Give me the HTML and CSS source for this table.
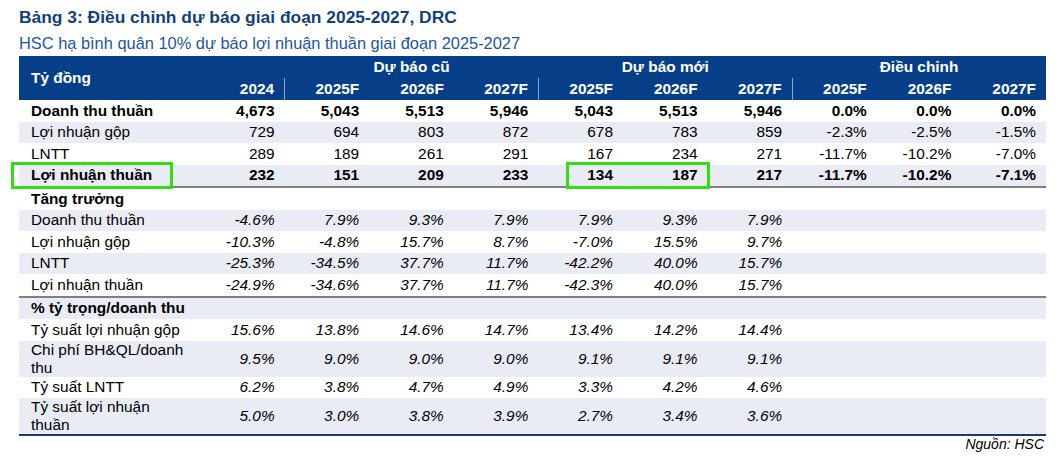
FILE: index.html
```html
<!DOCTYPE html>
<html lang="vi">
<head>
<meta charset="utf-8">
<title>Bảng 3</title>
<link rel="stylesheet" href="styles.css">
</head>
<body>
<div class="page">
  <h1 class="title">Bảng 3: Điều chỉnh dự báo giai đoạn 2025-2027, DRC</h1>
  <h2 class="subtitle">HSC hạ bình quân 10% dự báo lợi nhuận thuần giai đoạn 2025-2027</h2>
  <table class="data">
    <colgroup>
      <col class="c-label">
      <col><col><col><col><col><col><col><col><col><col>
    </colgroup>
    <thead>
      <tr>
        <th class="h-label" rowspan="2">Tỷ đồng</th>
        <th></th>
        <th class="group" colspan="3">Dự báo cũ</th>
        <th class="group" colspan="3">Dự báo mới</th>
        <th class="group" colspan="3">Điều chỉnh</th>
      </tr>
      <tr>
        <th>2024</th>
        <th class="sep">2025F</th>
        <th>2026F</th>
        <th>2027F</th>
        <th class="sep">2025F</th>
        <th>2026F</th>
        <th>2027F</th>
        <th class="sep">2025F</th>
        <th>2026F</th>
        <th>2027F</th>
      </tr>
    </thead>
    <tbody>
      <tr class="bold">
        <td>Doanh thu thuần</td>
        <td>4,673</td><td>5,043</td><td>5,513</td><td>5,946</td><td>5,043</td><td>5,513</td><td>5,946</td><td>0.0%</td><td>0.0%</td><td>0.0%</td>
      </tr>
      <tr>
        <td>Lợi nhuận gộp</td>
        <td>729</td><td>694</td><td>803</td><td>872</td><td>678</td><td>783</td><td>859</td><td>-2.3%</td><td>-2.5%</td><td>-1.5%</td>
      </tr>
      <tr>
        <td>LNTT</td>
        <td>289</td><td>189</td><td>261</td><td>291</td><td>167</td><td>234</td><td>271</td><td>-11.7%</td><td>-10.2%</td><td>-7.0%</td>
      </tr>
      <tr class="bold section-end">
        <td class="anchor">Lợi nhuận thuần<span class="hl hl-label"></span></td>
        <td>232</td><td>151</td><td>209</td><td>233</td><td class="anchor">134<span class="hl hl-values"></span></td><td>187</td><td>217</td><td>-11.7%</td><td>-10.2%</td><td>-7.1%</td>
      </tr>
      <tr class="bold">
        <td>Tăng trưởng</td>
        <td></td><td></td><td></td><td></td><td></td><td></td><td></td><td></td><td></td><td></td>
      </tr>
      <tr class="ital">
        <td>Doanh thu thuần</td>
        <td>-4.6%</td><td>7.9%</td><td>9.3%</td><td>7.9%</td><td>7.9%</td><td>9.3%</td><td>7.9%</td><td></td><td></td><td></td>
      </tr>
      <tr class="ital">
        <td>Lợi nhuận gộp</td>
        <td>-10.3%</td><td>-4.8%</td><td>15.7%</td><td>8.7%</td><td>-7.0%</td><td>15.5%</td><td>9.7%</td><td></td><td></td><td></td>
      </tr>
      <tr class="ital">
        <td>LNTT</td>
        <td>-25.3%</td><td>-34.5%</td><td>37.7%</td><td>11.7%</td><td>-42.2%</td><td>40.0%</td><td>15.7%</td><td></td><td></td><td></td>
      </tr>
      <tr class="ital section-end">
        <td>Lợi nhuận thuần</td>
        <td>-24.9%</td><td>-34.6%</td><td>37.7%</td><td>11.7%</td><td>-42.3%</td><td>40.0%</td><td>15.7%</td><td></td><td></td><td></td>
      </tr>
      <tr class="bold">
        <td>% tỷ trọng/doanh thu</td>
        <td></td><td></td><td></td><td></td><td></td><td></td><td></td><td></td><td></td><td></td>
      </tr>
      <tr class="ital">
        <td>Tỷ suất lợi nhuận gộp</td>
        <td>15.6%</td><td>13.8%</td><td>14.6%</td><td>14.7%</td><td>13.4%</td><td>14.2%</td><td>14.4%</td><td></td><td></td><td></td>
      </tr>
      <tr class="ital">
        <td>Chi phí BH&amp;QL/doanh thu</td>
        <td>9.5%</td><td>9.0%</td><td>9.0%</td><td>9.0%</td><td>9.1%</td><td>9.1%</td><td>9.1%</td><td></td><td></td><td></td>
      </tr>
      <tr class="ital">
        <td>Tỷ suất LNTT</td>
        <td>6.2%</td><td>3.8%</td><td>4.7%</td><td>4.9%</td><td>3.3%</td><td>4.2%</td><td>4.6%</td><td></td><td></td><td></td>
      </tr>
      <tr class="ital table-end">
        <td>Tỷ suất lợi nhuận thuần</td>
        <td>5.0%</td><td>3.0%</td><td>3.8%</td><td>3.9%</td><td>2.7%</td><td>3.4%</td><td>3.6%</td><td></td><td></td><td></td>
      </tr>
    </tbody>
  </table>
  <p class="source">Nguồn: HSC</p>
</div>
</body>
</html>
```

FILE: styles.css
```css
body {
  margin: 0;
  background: #ffffff;
  font-family: "Liberation Sans", Arial, sans-serif;
  color: #000000;
}

.page {
  padding: 7px 14px 0 19px;
}

.title {
  margin: 0;
  font-size: 17.4px;
  line-height: 20px;
  font-weight: bold;
  color: #143f7d;
}

.subtitle {
  margin: 6px 0 0;
  font-size: 16.4px;
  line-height: 21px;
  font-weight: normal;
  color: #1d56a0;
}

.data {
  margin-top: 2px;
  width: 1027px;
  border-collapse: collapse;
  table-layout: fixed;
  font-size: 15.4px;
}

.c-label {
  width: 181px;
}

.data th {
  background: #063f87;
  color: #ffffff;
  font-weight: bold;
  height: 22px;
  padding: 0 10px 0 0;
  line-height: 18px;
  text-align: right;
  vertical-align: middle;
}

.data th.h-label {
  text-align: left;
  padding-left: 12px;
}

.data th.group {
  text-align: center;
  padding: 0;
}

.data th.sep {
  border-left: 1px solid #8ea6cf;
}

.data td {
  height: 21.5px;
  padding: 0 10px 0 0;
  line-height: 18px;
  text-align: right;
  vertical-align: middle;
  white-space: nowrap;
}

.data td:first-child {
  text-align: left;
  padding: 0 11px 0 12px;
  white-space: normal;
}

.data tbody tr:nth-child(even) td {
  background: #e9ecf4;
}

.bold td {
  font-weight: bold;
}

.ital td {
  font-style: italic;
}

.ital td:first-child {
  font-style: normal;
}

.section-end td {
  border-bottom: 2px solid #7f7f7f;
}

.table-end td {
  border-bottom: 2px solid #1f3a6e;
}

.anchor {
  position: relative;
}

.hl {
  position: absolute;
  box-sizing: border-box;
  border: 3px solid #33dd11;
  pointer-events: none;
}

.hl-label {
  left: -8px;
  top: -3px;
  width: 162px;
  height: 27px;
}

.hl-values {
  left: 28px;
  top: -3px;
  width: 144px;
  height: 27px;
}

.source {
  margin: 0;
  padding-right: 2px;
  text-align: right;
  font-style: italic;
  font-size: 14px;
  line-height: 16px;
}
```
